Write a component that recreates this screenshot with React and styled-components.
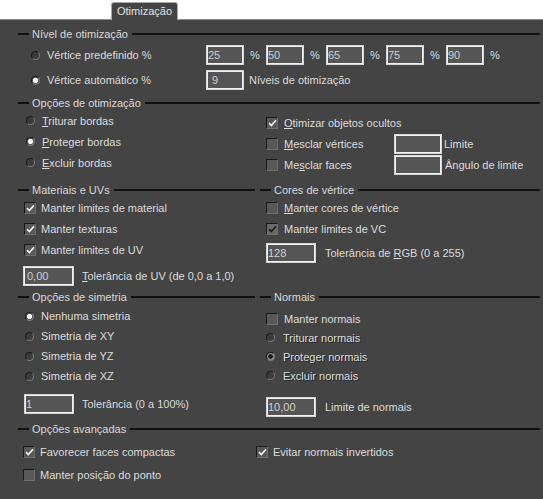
import React from "react";
import styled, { createGlobalStyle } from "styled-components";

const GlobalStyle = createGlobalStyle`
  html, body {
    margin: 0;
    padding: 0;
    background: #444444;
  }
  body {
    font-family: "Liberation Sans", Arial, sans-serif;
    font-size: 11px;
    color: #dcdcdc;
  }
`;

const Window = styled.div`
  width: 543px;
  height: 499px;
  background: #444444;
  overflow: hidden;
`;

const TabStrip = styled.div`
  height: 20px;
  box-sizing: border-box;
  background: #ffffff;
  border-bottom: 1px solid #8c8c8c;
  display: flex;
  align-items: flex-end;
  padding-left: 111px;
`;

const Tab = styled.div`
  height: 18px;
  margin-bottom: -1px;
  box-sizing: border-box;
  padding: 0 5px;
  background: #444444;
  border: 1px solid #a8a8a8;
  border-bottom: none;
  border-radius: 3px 3px 0 0;
  line-height: 17px;
  color: #e2e2e2;
`;

const Panel = styled.div`
  padding: 0 3px 0 18px;
`;

const Legend = styled.div`
  display: flex;
  align-items: center;
  height: 14px;
  margin-top: ${(p) => p.$mt || 0}px;
  color: #d8d8d8;

  &::before {
    content: "";
    width: 11px;
    height: 2px;
    background: #101010;
    margin-right: 3px;
    flex: none;
  }
  &::after {
    content: "";
    flex: 1;
    height: 2px;
    background: #101010;
    margin-left: 4px;
  }
`;

const Columns = styled.div`
  display: grid;
  grid-template-columns: ${(p) => p.$left || 237}px 1fr;
  column-gap: ${(p) => (p.$gap === undefined ? 5 : p.$gap)}px;
  margin-top: ${(p) => p.$mt || 0}px;
  padding-left: ${(p) => p.$pl || 0}px;
  align-items: start;
`;

const Column = styled.div`
  display: flex;
  flex-direction: column;
  padding-left: ${(p) => p.$pl || 0}px;
  padding-top: ${(p) => p.$pt || 0}px;
`;

const Row = styled.div`
  display: flex;
  align-items: center;
  height: ${(p) => p.$h || 21}px;
  margin-top: ${(p) => p.$mt || 0}px;
  padding-left: ${(p) => p.$pl || 0}px;
  white-space: nowrap;
`;

const Option = styled.div`
  display: flex;
  align-items: center;
  gap: ${(p) => p.$gap || 6}px;
  width: ${(p) => (p.$w ? `${p.$w}px` : "auto")};
  flex: none;
  text-shadow: ${(p) => (p.$dim ? "1px 1px 0 #262626" : "none")};
`;

const Radio = styled.span`
  width: 9px;
  height: 9px;
  flex: none;
  box-sizing: border-box;
  border-radius: 50%;
  border: 1px solid #1c1c1c;
  border-right-color: #7a7a7a;
  border-bottom-color: #7a7a7a;
  background: ${(p) =>
    p.$on
      ? p.$dim
        ? "radial-gradient(circle, #1a1a1a 0 2px, #8e8e8e 2.6px)"
        : "radial-gradient(circle, #f6f6f6 0 2.2px, #5c5c5c 3px)"
      : "#3c3c3c"};
`;

const Box = styled.span`
  width: 12px;
  height: 12px;
  flex: none;
  box-sizing: border-box;
  border: 1px solid #1a1a1a;
  border-right-color: #6e6e6e;
  border-bottom-color: #6e6e6e;
  background: ${(p) => (p.$dim ? "#6a6a6a" : "#585858")};
  display: flex;
  align-items: center;
  justify-content: center;
`;

const Field = styled.input`
  width: ${(p) => p.$w || 38}px;
  height: 20px;
  box-sizing: border-box;
  margin: 0;
  margin-left: ${(p) => p.$ml || 0}px;
  padding: 0 0 0 ${(p) => p.$pad || 1}px;
  flex: none;
  background: #555555;
  border: 1px solid #d6d6d6;
  box-shadow: inset 0 0 0 1px #f2f2f2;
  outline: none;
  font-family: "Liberation Sans", Arial, sans-serif;
  font-size: 11px;
  color: #cfcfcf;
`;

const Text = styled.span`
  margin-left: ${(p) => p.$ml || 0}px;
`;

const PercentCell = styled.div`
  display: flex;
  align-items: center;
  width: 60px;
  flex: none;
`;

function Check({ on, dim }) {
  return (
    <Box $dim={dim}>
      {on && (
        <svg width="9" height="8" viewBox="0 0 9 8">
          <path
            d="M1 4.2 L3.4 6.5 L8 1.2"
            fill="none"
            stroke={dim ? "#1e1e1e" : "#f4f4f4"}
            strokeWidth="1.7"
          />
        </svg>
      )}
    </Box>
  );
}

function CheckOption({ on, dim, children, gap = 5, w }) {
  return (
    <Option $gap={gap} $w={w}>
      <Check on={on} dim={dim} />
      <span>{children}</span>
    </Option>
  );
}

function RadioOption({ on, dim, children, gap = 7, w }) {
  return (
    <Option $gap={gap} $w={w} $dim={dim}>
      <Radio $on={on} $dim={dim} />
      <span>{children}</span>
    </Option>
  );
}

const presets = ["25", "50", "65", "75", "90"];

export default function App() {
  return (
    <Window>
      <GlobalStyle />
      <TabStrip>
        <Tab>Otimização</Tab>
      </TabStrip>
      <Panel>
        <Legend $mt={7}>
          <span>Nível de otimização</span>
        </Legend>
        <Row $h={20} $mt={4} $pl={13}>
          <RadioOption w={175}>Vértice predefinido %</RadioOption>
          {presets.map((v) => (
            <PercentCell key={v}>
              <Field readOnly defaultValue={v} />
              <Text $ml={6}>%</Text>
            </PercentCell>
          ))}
        </Row>
        <Row $h={20} $mt={5} $pl={13}>
          <RadioOption on w={175}>
            Vértice automático %
          </RadioOption>
          <Field readOnly defaultValue="9" $pad={5} />
          <Text $ml={5}>Níveis de otimização</Text>
        </Row>

        <Legend $mt={6}>
          <span>Opções de otimização</span>
        </Legend>
        <Columns>
          <Column $pl={8}>
            <Row>
              <RadioOption>
                <u>T</u>riturar bordas
              </RadioOption>
            </Row>
            <Row>
              <RadioOption on>
                <u>P</u>roteger bordas
              </RadioOption>
            </Row>
            <Row>
              <RadioOption>
                <u>E</u>xcluir bordas
              </RadioOption>
            </Row>
          </Column>
          <Column $pl={6} $pt={2}>
            <Row>
              <CheckOption on gap={6}>
                <u>O</u>timizar objetos ocultos
              </CheckOption>
            </Row>
            <Row>
              <CheckOption gap={6} w={128}>
                <u>M</u>esclar vértices
              </CheckOption>
              <Field readOnly defaultValue="" $w={48} />
              <Text $ml={2}>Limite</Text>
            </Row>
            <Row>
              <CheckOption gap={6} w={128}>
                Me<u>s</u>clar faces
              </CheckOption>
              <Field readOnly defaultValue="" $w={48} />
              <Text $ml={3}>Ângulo de limite</Text>
            </Row>
          </Column>
        </Columns>

        <Columns $mt={8}>
          <Column>
            <Legend>
              <span>Materiais e UVs</span>
            </Legend>
            <Row $pl={6}>
              <CheckOption on>Manter limites de material</CheckOption>
            </Row>
            <Row $pl={6}>
              <CheckOption on>Manter texturas</CheckOption>
            </Row>
            <Row $pl={6}>
              <CheckOption on>Manter limites de UV</CheckOption>
            </Row>
            <Row $h={20} $mt={6} $pl={5}>
              <Field readOnly defaultValue="0,00" $w={51} $pad={3} />
              <Text $ml={8}>
                <u>T</u>olerância de UV (de 0,0 a 1,0)
              </Text>
            </Row>
          </Column>
          <Column>
            <Legend>
              <span>Cores de vértice</span>
            </Legend>
            <Row $pl={6}>
              <CheckOption gap={6}>
                <u>M</u>anter cores de vértice
              </CheckOption>
            </Row>
            <Row $pl={6}>
              <CheckOption on dim gap={6}>
                Manter limites de VC
              </CheckOption>
            </Row>
            <Row $h={20} $mt={4} $pl={6}>
              <Field readOnly defaultValue="128" $w={50} />
              <Text $ml={9}>
                Tolerância de <u>R</u>GB (0 a 255)
              </Text>
            </Row>
          </Column>
        </Columns>

        <Columns $mt={4}>
          <Column>
            <Legend>
              <span>Opções de simetria</span>
            </Legend>
            <Row $h={20} $mt={2} $pl={7}>
              <RadioOption on>Nenhuma simetria</RadioOption>
            </Row>
            <Row $h={20} $pl={7}>
              <RadioOption>Simetria de XY</RadioOption>
            </Row>
            <Row $h={20} $pl={7}>
              <RadioOption>Simetria de YZ</RadioOption>
            </Row>
            <Row $h={20} $pl={7}>
              <RadioOption>Simetria de XZ</RadioOption>
            </Row>
            <Row $h={20} $mt={8} $pl={6}>
              <Field readOnly defaultValue="1" $w={50} />
              <Text $ml={8}>Tolerância (0 a 100%)</Text>
            </Row>
          </Column>
          <Column>
            <Legend>
              <span>Normais</span>
            </Legend>
            <Row $h={19} $mt={5} $pl={6}>
              <CheckOption gap={6}>Manter normais</CheckOption>
            </Row>
            <Row $h={19} $pl={6}>
              <RadioOption dim gap={8}>
                Triturar normais
              </RadioOption>
            </Row>
            <Row $h={19} $pl={6}>
              <RadioOption on dim gap={8}>
                Proteger normais
              </RadioOption>
            </Row>
            <Row $h={19} $pl={6}>
              <RadioOption dim gap={8}>
                Excluir normais
              </RadioOption>
            </Row>
            <Row $h={20} $mt={12} $pl={6}>
              <Field readOnly defaultValue="10,00" $w={50} />
              <Text $ml={9}>Limite de normais</Text>
            </Row>
          </Column>
        </Columns>

        <Legend $mt={5}>
          <span>Opções avançadas</span>
        </Legend>
        <Columns $left={233} $gap={0} $pl={5} $mt={4}>
          <Column>
            <Row $h={23}>
              <CheckOption on>Favorecer faces compactas</CheckOption>
            </Row>
            <Row $h={23}>
              <CheckOption>Manter posição do ponto</CheckOption>
            </Row>
          </Column>
          <Column>
            <Row $h={23}>
              <CheckOption on>Evitar normais invertidos</CheckOption>
            </Row>
          </Column>
        </Columns>
      </Panel>
    </Window>
  );
}
